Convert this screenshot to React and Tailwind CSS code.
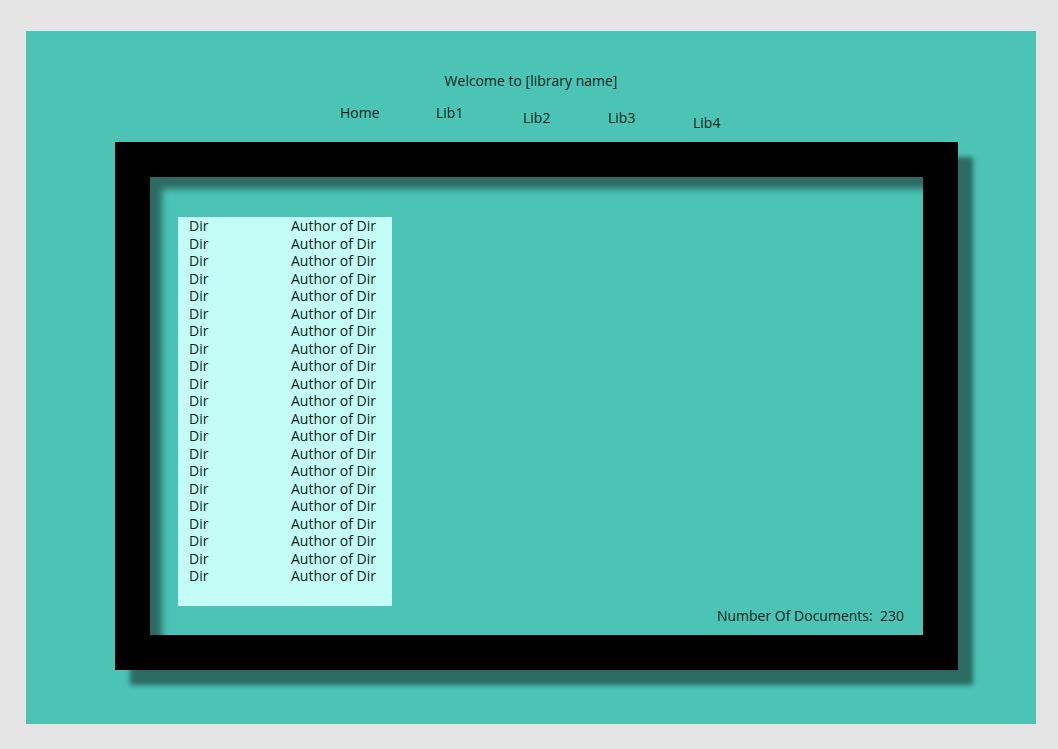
const ROWS = Array.from({ length: 21 }, (_, index) => index);

const NAV_ITEMS = [
  { label: "Home", offset: "mt-0", width: "w-[96px]" },
  { label: "Lib1", offset: "mt-0", width: "w-[87px]" },
  { label: "Lib2", offset: "mt-[5px]", width: "w-[85px]" },
  { label: "Lib3", offset: "mt-[5px]", width: "w-[85px]" },
  { label: "Lib4", offset: "mt-[10px]", width: "w-[60px]" },
];

function NavBar() {
  return (
    <nav className="ml-[314px] mt-[13px] flex h-[38px] items-start">
      {NAV_ITEMS.map((item) => (
        <span
          key={item.label}
          className={`${item.offset} ${item.width} text-[14px] leading-[18px]`}
        >
          {item.label}
        </span>
      ))}
    </nav>
  );
}

function DirList() {
  return (
    <div className="ml-[28px] mt-[39px] h-[389px] w-[214px] bg-[#c4fdf5] pl-[11px]">
      {ROWS.map((row) => (
        <div key={row} className="flex h-[17.5px] items-center text-[14px]">
          <span className="w-[102px]">Dir</span>
          <span>Author of Dir</span>
        </div>
      ))}
    </div>
  );
}

export default function App() {
  return (
    <div
      className="h-[749px] w-[1058px] bg-[#e5e5e5] px-[26px] pt-[31px] text-[#0c1f1b]"
      style={{ fontFamily: '"Open Sans", "Liberation Sans", sans-serif' }}
    >
      <div className="flex h-[693px] w-[1010px] flex-col bg-[#4bc4b6] pt-[40px]">
        <h1 className="text-center text-[14px] leading-[20px] font-normal">
          Welcome to [library name]
        </h1>

        <NavBar />

        <div className="ml-[89px] mt-0 h-[528px] w-[843px] bg-black p-[35px] shadow-[15px_15px_5px_#2c6b62]">
          <div className="relative h-[458px] w-[773px] bg-[#4bc4b6] pt-px shadow-[inset_12px_12px_7px_#2c6b62]">
            <DirList />

            <p className="absolute bottom-[10px] right-[19px] text-[14px] leading-[18px]">
              Number Of Documents:&nbsp; 230
            </p>
          </div>
        </div>
      </div>
    </div>
  );
}
